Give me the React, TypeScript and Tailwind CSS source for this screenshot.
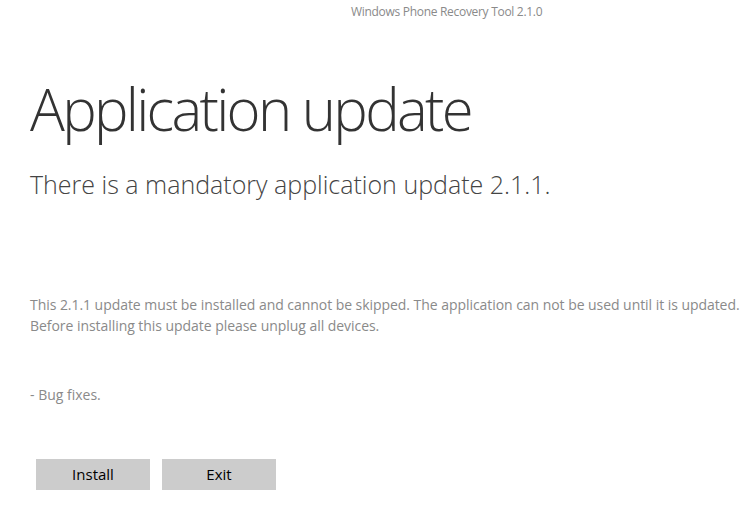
export default function App() {
  return (
    <div className="w-[750px] h-[516px] bg-white overflow-hidden font-['Open_Sans',sans-serif]">
      <div className="h-[26px] flex pl-[351px] pt-[3px]">
        <span className="text-[12px] text-[#8a8a8a] tracking-[-0.3px] whitespace-nowrap">Windows Phone Recovery Tool 2.1.0</span>
      </div>

      <div className="pl-[30px]">
        <h1 className="mt-[46px] text-[58px] leading-[74px] font-light text-[#333] tracking-[-2.7px] whitespace-nowrap">
          Application update
        </h1>
        <p className="mt-[20px] text-[25px] leading-[36px] font-light text-[#444] whitespace-nowrap">
          There is a mandatory application update 2.1.1.
        </p>

        <div className="mt-[92px] text-[14px] leading-[21px] text-[#8a8a8a] whitespace-nowrap tracking-[-0.05px]">
          <p>This 2.1.1 update must be installed and cannot be skipped. The application can not be used until it is updated.</p>
          <p>Before installing this update please unplug all devices.</p>
        </div>

        <p className="mt-[48px] text-[14px] leading-[21px] text-[#8a8a8a]">- Bug fixes.</p>

        <div className="mt-[54px] pl-[6px] flex gap-[12px]">
          <button className="w-[114px] h-[31px] bg-[#cccccc] text-[15px] text-black">Install</button>
          <button className="w-[114px] h-[31px] bg-[#cccccc] text-[15px] text-black">Exit</button>
        </div>
      </div>
    </div>
  )
}
